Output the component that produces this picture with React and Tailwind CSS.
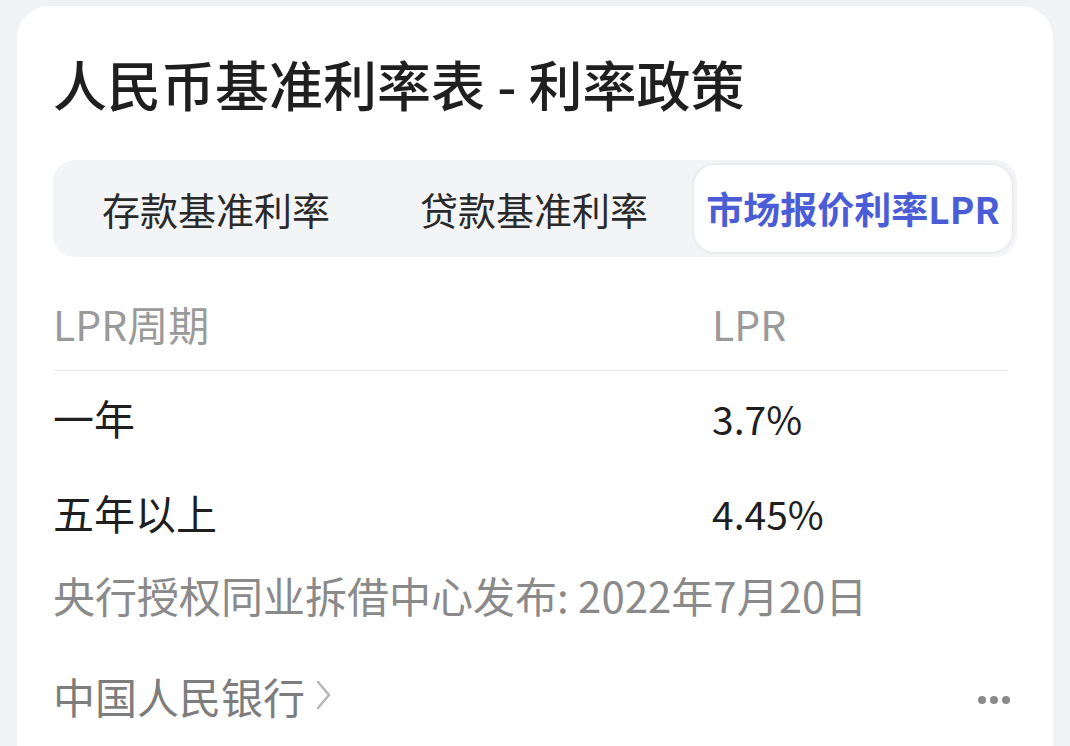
export default function App() {
  const font = { fontFamily: '"Noto Sans CJK SC", "Noto Sans", sans-serif' };
  return (
    <div className="w-[1070px] h-[746px] overflow-hidden bg-[#f1f2f4] pt-[6px] px-[17px]" style={font}>
      <div className="h-[800px] bg-white rounded-[32px] px-[36px] pt-[42px]">
        <h1 className="text-[54px] leading-[72px] font-medium text-[#1f1f1f]">
          人民币基准利率表 - 利率政策
        </h1>
        <div className="mt-[40px] h-[97px] w-[964px] bg-[#f3f4f6] rounded-[22px] p-[4px] flex">
          <div className="flex-1 flex items-center justify-center text-[38px] text-[#2a2a2a]">存款基准利率</div>
          <div className="flex-1 flex items-center justify-center text-[38px] text-[#2a2a2a]">贷款基准利率</div>
          <div className="flex-1 flex items-center justify-center text-[37px] font-bold text-[#4b5dd6] bg-white rounded-[22px] shadow-[0_0_3px_rgba(0,0,0,0.08)] border border-[#ececec]">
            市场报价利率LPR
          </div>
        </div>
        <div className="mt-[20px] mr-[9px] h-[94px] flex items-center border-b border-[#e8e8e8] text-[41px] text-[#9a9a9a]">
          <div className="w-[659px]">LPR周期</div>
          <div>LPR</div>
        </div>
        <div className="h-[94px] flex items-center text-[41px] text-[#1f1f1f]">
          <div className="w-[659px]">一年</div>
          <div className="text-[39px]">3.7%</div>
        </div>
        <div className="h-[96px] flex items-center text-[41px] text-[#1f1f1f]">
          <div className="w-[659px]">五年以上</div>
          <div className="text-[39px]">4.45%</div>
        </div>
        <div className="h-[66px] flex items-center text-[42px] text-[#8a8a8a]">
          央行授权同业拆借中心发布: 2022年7月20日
        </div>
        <div className="mt-[33px] h-[70px] flex items-center justify-between">
          <div className="flex items-center text-[42px] text-[#7d7d7d]">
            <span>中国人民银行</span>
            <svg width="22" height="36" viewBox="0 0 22 36" className="ml-[8px]">
              <path d="M5 5 L16 18 L5 31" fill="none" stroke="#b5b5b5" strokeWidth="2.5" strokeLinecap="round" strokeLinejoin="round" />
            </svg>
          </div>
          <div className="flex items-center gap-[4px] mr-[7px] mt-[10px]">
            <span className="w-[8px] h-[8px] rounded-full bg-[#8a8a8a]" />
            <span className="w-[8px] h-[8px] rounded-full bg-[#8a8a8a]" />
            <span className="w-[8px] h-[8px] rounded-full bg-[#8a8a8a]" />
          </div>
        </div>
      </div>
    </div>
  );
}
